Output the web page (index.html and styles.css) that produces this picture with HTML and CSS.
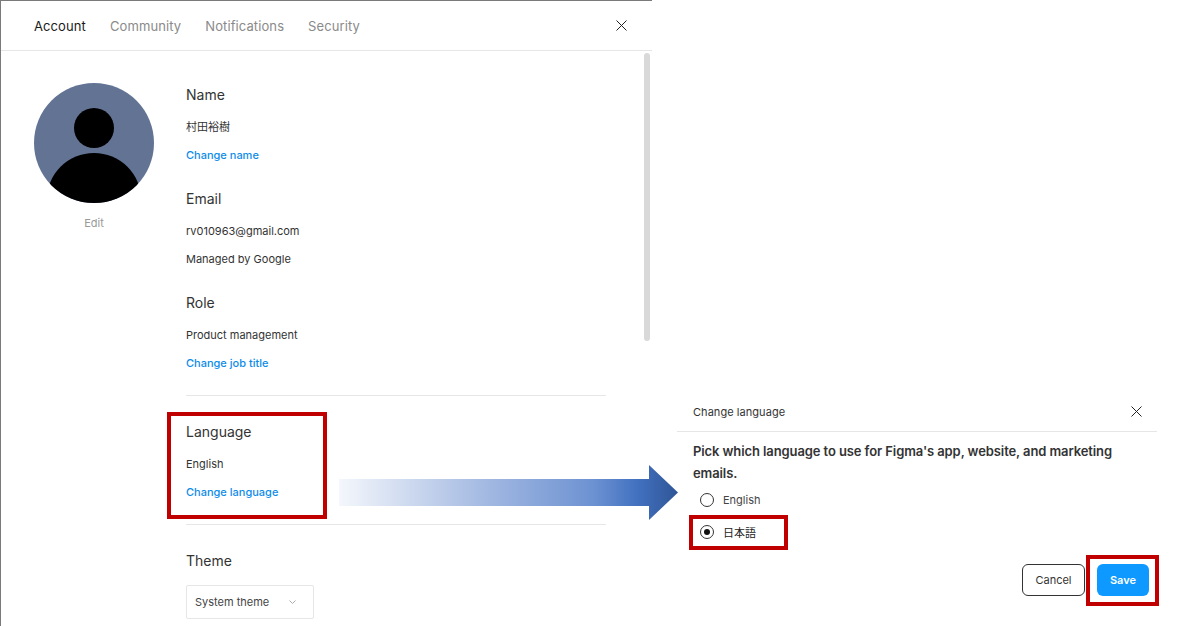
FILE: index.html
```html
<!DOCTYPE html>
<html lang="en">
<head>
<meta charset="utf-8">
<title>Change language</title>
<link rel="stylesheet" href="styles.css">
</head>
<body>
<div class="stage">
  <section class="panel">
    <header class="tabs">
      <span class="tab active">Account</span>
      <span class="tab">Community</span>
      <span class="tab">Notifications</span>
      <span class="tab">Security</span>
      <svg class="close close-panel" width="11" height="11" viewBox="0 0 11 11"><path d="M.5.5l10 10M10.500.5l-10 10" stroke="#222" fill="none"/></svg>
    </header>
    <div class="panel-body">
      <aside class="profile">
        <svg class="avatar" width="120" height="120" viewBox="0 0 120 120">
          <defs><clipPath id="avatar-clip"><circle cx="60" cy="60" r="60"/></clipPath></defs>
          <circle cx="60" cy="60" r="60" fill="#627394"/>
          <g clip-path="url(#avatar-clip)">
            <circle cx="60" cy="45" r="20" fill="#000"/>
            <circle cx="60" cy="117.300" r="47.300" fill="#000"/>
          </g>
        </svg>
        <span class="edit">Edit</span>
      </aside>
      <div class="fields">
        <div class="field">
          <h2>Name</h2>
          <p>村田裕樹</p>
          <a>Change name</a>
        </div>
        <div class="field">
          <h2>Email</h2>
          <p>rv010963@gmail.com</p>
          <p>Managed by Google</p>
        </div>
        <div class="field">
          <h2>Role</h2>
          <p>Product management</p>
          <a>Change job title</a>
        </div>
        <div class="field ruled">
          <h2>Language</h2>
          <p>English</p>
          <a>Change language</a>
          <span class="mark mark-language"></span>
        </div>
        <div class="field ruled">
          <h2>Theme</h2>
          <div class="select">
            <span>System theme</span>
            <svg width="7" height="4" viewBox="0 0 7 4"><path d="M.5.500L3.500 3.500 6.500.500" stroke="#aaa" fill="none"/></svg>
          </div>
        </div>
      </div>
      <span class="scrollbar"></span>
    </div>
  </section>

  <svg class="arrow" width="340" height="56" viewBox="0 0 340 56">
    <defs>
      <linearGradient id="arrow-fill" x1="0" x2="1" y1="0" y2="0">
        <stop offset="0" stop-color="#f4f7fc"/>
        <stop offset="0.25" stop-color="#c5d3ec"/>
        <stop offset="0.5" stop-color="#97b0de"/>
        <stop offset="0.75" stop-color="#6d92d2"/>
        <stop offset="0.88" stop-color="#4271c0"/>
        <stop offset="1" stop-color="#2f5596"/>
      </linearGradient>
    </defs>
    <path d="M0 14H310V0L339 27.500 310 55V41H0Z" fill="url(#arrow-fill)"/>
  </svg>

  <section class="dialog">
    <header class="dialog-head">
      <span>Change language</span>
      <svg class="close" width="11" height="11" viewBox="0 0 11 11"><path d="M.5.5l10 10M10.500.5l-10 10" stroke="#222" fill="none"/></svg>
    </header>
    <div class="dialog-body">
      <p class="prompt">Pick which language to use for Figma's app, website, and marketing emails.</p>
      <label class="radio"><span class="dot"></span><span>English</span></label>
      <label class="radio jp"><span class="dot on"></span><span>日本語</span><span class="mark mark-jp"></span></label>
      <div class="actions">
        <button class="btn cancel">Cancel</button>
        <button class="btn save">Save<span class="mark mark-save"></span></button>
      </div>
    </div>
  </section>
</div>
</body>
</html>
```
FILE: styles.css
```css
* { box-sizing: border-box; }
html, body { margin: 0; height: 100%; background: #fff; }
body {
  font-family: Inter, "Noto Sans CJK JP", sans-serif;
  color: #333;
  overflow: hidden;
}
.stage {
  position: relative;
  width: 1178px;
  height: 626px;
  display: flex;
  align-items: flex-start;
}
.panel {
  width: 652px;
  height: 626px;
  flex: none;
  overflow: hidden;
  border-top: 1px solid #7a7a7a;
  border-left: 1px solid #7a7a7a;
}
.tabs {
  height: 50px;
  display: flex;
  align-items: center;
  gap: 24px;
  padding: 1px 25px 0 33px;
  border-bottom: 1px solid #e6e6e6;
}
.tab { font-size: 13px; letter-spacing: 0.1px; color: #8a8a8a; }
.tab.active { color: #1a1a1a; }
.close-panel { margin-left: auto; margin-top: -1px; }
.panel-body {
  position: relative;
  display: flex;
  padding-top: 32px;
}
.profile {
  width: 120px;
  margin-left: 33px;
  display: flex;
  flex-direction: column;
  align-items: center;
  gap: 13px;
  flex: none;
}
.avatar { display: block; }
.edit { font-size: 11px; line-height: 14px; color: #999; }
.fields {
  width: 420px;
  margin-left: 32px;
  flex: none;
}
.field {
  position: relative;
  height: 104px;
}
.field h2 {
  margin: 0;
  font-size: 14px;
  font-weight: 400;
  line-height: 24px;
  color: #333;
}
.field p, .field a {
  display: block;
  margin: 0;
  font-size: 11px;
  line-height: 16px;
  padding-top: 12px;
  color: #333;
}
.field a { color: #0c8ce9; font-weight: 500; }
.field.ruled { border-top: 1px solid #e6e6e6; padding-top: 24px; height: 129px; }
.select {
  width: 128px;
  height: 34px;
  margin-top: 12px;
  padding: 0 17px 0 8px;
  display: flex;
  align-items: center;
  justify-content: space-between;
  border: 1px solid #e6e6e6;
  border-radius: 2px;
  font-size: 11px;
  color: #444;
}
.scrollbar {
  position: absolute;
  left: 643px;
  top: 2px;
  width: 6px;
  height: 288px;
  border-radius: 3px;
  background: #d9d9d9;
}
.mark {
  position: absolute;
  border: 4px solid #c00000;
  pointer-events: none;
}
.mark-language { left: -19px; top: 16px; width: 160px; height: 107px; }
.arrow {
  position: absolute;
  left: 339px;
  top: 465px;
}
.dialog {
  width: 480px;
  margin: 396px 0 0 25px;
  flex: none;
}
.dialog-head {
  height: 36px;
  padding: 0 15px 4px 16px;
  display: flex;
  align-items: center;
  justify-content: space-between;
  border-bottom: 1px solid #e6e6e6;
  font-size: 11px;
  font-weight: 400;
  letter-spacing: 0.05px;
  color: #333;
}
.dialog-body { padding: 8px 8px 0 16px; }
.prompt {
  margin: 0;
  font-size: 13px;
  font-weight: 600;
  letter-spacing: -0.1px;
  line-height: 22px;
  color: #333;
}
.radio {
  position: relative;
  display: flex;
  align-items: center;
  gap: 9px;
  height: 32px;
  margin-left: 7px;
  font-size: 11px;
  color: #444;
}
.radio.jp { color: #222; }
.dot {
  width: 14px;
  height: 14px;
  border: 1px solid #333;
  border-radius: 50%;
  display: flex;
  align-items: center;
  justify-content: center;
}
.dot.on::after {
  content: "";
  width: 6px;
  height: 6px;
  border-radius: 50%;
  background: #111;
}
.mark-jp { left: -11px; top: -1px; width: 99px; height: 35px; }
.actions {
  display: flex;
  justify-content: flex-end;
  gap: 12px;
  margin-top: 16px;
}
.btn {
  position: relative;
  height: 32px;
  border-radius: 6px;
  font-family: inherit;
  font-size: 11px;
  font-weight: 400;
  padding: 0;
}
.cancel { width: 63px; border: 1px solid #333; background: #fff; color: #333; }
.save { width: 52px; border: 0; background: #0d99ff; color: #fff; font-weight: 600; }
.mark-save { left: -11px; top: -9px; width: 73px; height: 51px; }
```
